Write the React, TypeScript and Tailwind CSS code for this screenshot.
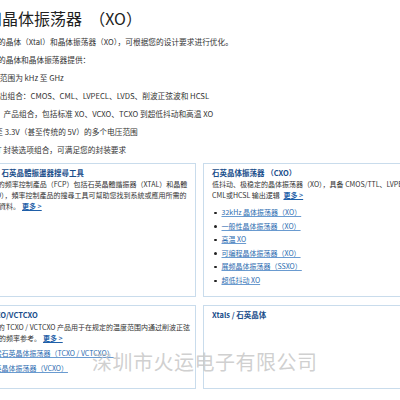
import React from 'react';

const font = "font-['Noto_Sans_CJK_SC',sans-serif]";

function Bullet({ children, lh }: { children: React.ReactNode; lh: string }) {
  return (
    <li className={`flex items-center gap-[5px] ${lh}`}>
      <span className="w-[2.5px] h-[2.5px] rounded-full bg-[#222] shrink-0 ml-[2px]" />
      <a className="text-[#2b6cb0] underline underline-offset-1 decoration-[#6a9bd0] whitespace-nowrap">{children}</a>
    </li>
  );
}

function More() {
  return <a className="text-[#1f5fa8] font-bold underline underline-offset-1 ml-[2px]">更多 &gt;</a>;
}

export default function App() {
  const features = [
    '工作频率范围为 kHz 至 GHz',
    '多样化输出组合：CMOS、CML、LVPECL、LVDS、削波正弦波和 HCSL',
    '丰富多样\u2002产品组合，包括标准 XO、VCXO、TCXO 到超低抖动和高温 XO',
    '从 1.8V 至 3.3V（甚至传统的 5V）的多个电压范围',
    '多种 SMT 封装选项组合，可满足您的封装要求',
  ];

  const cxo = [
    '32kHz 晶体振荡器（XO）',
    '一般性晶体振荡器（XO）',
    '高温 XO',
    '可编程晶体振荡器（XO）',
    '展频晶体振荡器（SSXO）',
    '超低抖动 XO',
  ];

  return (
    <div className={`relative w-[400px] h-[400px] overflow-hidden bg-white text-[#333] ${font}`}>
      <div className="-ml-[47px] w-[740px] pt-[7px]">
        <h1 className="ml-[1px] text-[16px] leading-[22px] text-[#222] whitespace-nowrap">晶体和晶体振荡器&nbsp; （XO）</h1>

        <div className="mt-[4px] ml-[8px] text-[7.7px] leading-[18px] whitespace-nowrap">
          <p>Microchip 的晶体（Xtal）和晶体振荡器（XO），可根据您的设计要求进行优化。</p>
          <p>Microchip 的晶体和晶体振荡器提供：</p>
          <ul className="ml-[8px]">
            {features.map(f => (
              <li key={f}>{f}</li>
            ))}
          </ul>
        </div>

        <div className="mt-[4px] grid grid-cols-[243px_260px] grid-rows-[134px_84px] gap-x-[7px] gap-y-[8px]">
          {/* search tool */}
          <div className="border border-[#c9dcec] pl-[10px] pr-[8px] pt-[3px]">
            <h3 className="text-[7.5px] leading-[12px] font-bold text-[#1a4e8b] whitespace-nowrap">频率控制：石英晶體振盪器搜尋工具</h3>
            <p className="text-[7px] leading-[11px] whitespace-nowrap">
              Microchip 的频率控制產品（FCP）包括石英晶體諧振器（XTAL）和晶體
              <br />
              振盪器（XO），頻率控制產品的搜尋工具可幫助您找到系統或應用所需的
              <br />
              產品和相關資料。<More />
            </p>
          </div>

          {/* CXO */}
          <div className="border border-[#c9dcec] px-[8px] pt-[3px]">
            <h3 className="text-[7.5px] leading-[12px] font-bold text-[#1a4e8b] whitespace-nowrap">石英晶体振荡器 （CXO）</h3>
            <p className="text-[7px] leading-[11px] whitespace-nowrap">
              低抖动、极稳定的晶体振荡器（XO），具备 CMOS/TTL、LVPECL、LVDS、
              <br />
              CML或HCSL 输出逻辑 <More />
            </p>
            <ul className="mt-[5px] text-[7px]">
              {cxo.map(c => (
                <Bullet key={c} lh="leading-[13.6px]">{c}</Bullet>
              ))}
            </ul>
          </div>

          {/* TCXO */}
          <div className="border border-[#c9dcec] pl-[10px] pr-[8px] pt-[3px]">
            <h3 className="text-[7.5px] leading-[12px] font-bold text-[#1a4e8b] whitespace-nowrap">温补型TCXO/VCTCXO</h3>
            <p className="mt-[1px] text-[7px] leading-[11px] whitespace-nowrap">
              Microchip 的 TCXO / VCTCXO 产品用于在规定的温度范围内通过削波正弦
              <br />
              波输出精确的频率参考。<More />
            </p>
            <ul className="mt-[2px] text-[7px]">
              <Bullet lh="leading-[14.7px]">温度补偿石英晶体振荡器（TCXO / VCTCXO）</Bullet>
              <Bullet lh="leading-[14.7px]">压控石英晶体振荡器（VCXO）</Bullet>
            </ul>
          </div>

          {/* Xtals */}
          <div className="border border-[#c9dcec] px-[8px] pt-[3px]">
            <h3 className="text-[7.5px] leading-[12px] font-bold text-[#1a4e8b] whitespace-nowrap">Xtals / 石英晶体</h3>
          </div>
        </div>
      </div>

      {/* watermark */}
      <div className="absolute left-[92px] top-[349px] text-[20px] leading-[26px] tracking-[0.5px] text-[#c4c4c4]/80 whitespace-nowrap pointer-events-none">
        深圳市火运电子有限公司
      </div>
    </div>
  );
}
